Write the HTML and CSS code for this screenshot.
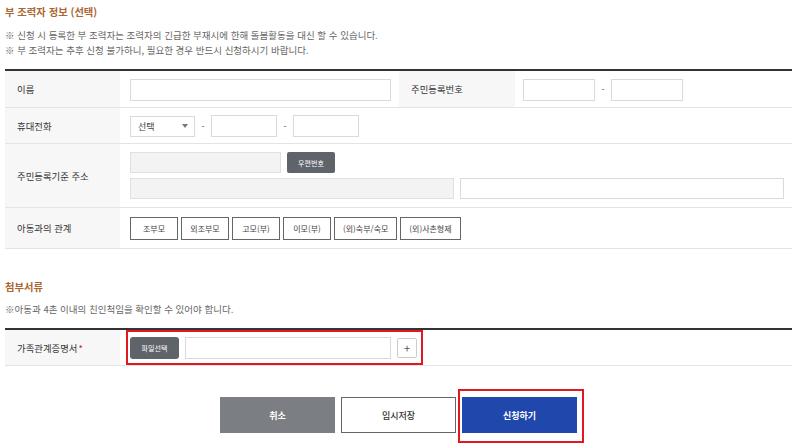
FILE: index.html
```html
<!DOCTYPE html>
<html lang="ko">
<head>
<meta charset="utf-8">
<link rel="stylesheet" href="styles.css">
</head>
<body>
<div class="page">
  <h2 class="sec-title">부 조력자 정보 (선택)</h2>
  <p class="note first">※ 신청 시 등록한 부 조력자는 조력자의 긴급한 부재시에 한해 돌봄활동을 대신 할 수 있습니다.</p>
  <p class="note">※ 부 조력자는 추후 신청 불가하니, 필요한 경우 반드시 신청하시기 바랍니다.</p>

  <div class="form-table">
    <div class="row r1">
      <div class="label">이름</div>
      <div class="cell"><span class="input w260"></span></div>
      <div class="label">주민등록번호</div>
      <div class="cell c2"><span class="input w72"></span><span class="dash">-</span><span class="input w72"></span></div>
    </div>
    <div class="row r2">
      <div class="label">휴대전화</div>
      <div class="cell span3">
        <span class="select"><span>선택</span><span class="caret"></span></span>
        <span class="dash">-</span><span class="input w66"></span>
        <span class="dash">-</span><span class="input w66"></span>
      </div>
    </div>
    <div class="row r3">
      <div class="label">주민등록기준 주소</div>
      <div class="cell span3 addr">
        <div class="line"><span class="input grey w151"></span><span class="btn-dark zip">우편번호</span></div>
        <div class="line"><span class="input grey w323"></span><span class="input w324"></span></div>
      </div>
    </div>
    <div class="row r4">
      <div class="label">아동과의 관계</div>
      <div class="cell span3 rel">
        <span class="chip">조부모</span>
        <span class="chip">외조부모</span>
        <span class="chip">고모(부)</span>
        <span class="chip">이모(부)</span>
        <span class="chip">(외)숙부/숙모</span>
        <span class="chip">(외)사촌형제</span>
      </div>
    </div>
  </div>

  <h2 class="sec-title attach">첨부서류</h2>
  <p class="note first2">※아동과 4촌 이내의 친인척임을 확인할 수 있어야 합니다.</p>

  <div class="form-table">
    <div class="row r5">
      <div class="label">가족관계증명서 <span class="req">*</span></div>
      <div class="cell span3">
        <div class="file-group mark">
          <span class="btn-dark file">파일선택</span>
          <span class="input w206"></span>
          <span class="plus">+</span>
        </div>
      </div>
    </div>
  </div>

  <div class="actions">
    <span class="act cancel">취소</span>
    <span class="act save">임시저장</span>
    <span class="act submit mark2">신청하기</span>
  </div>
</div>
</body>
</html>
```

FILE: styles.css
```css
* { box-sizing: border-box; }
html, body { margin: 0; padding: 0; background: #fff; }
body {
  font-family: "Noto Sans CJK KR", "Noto Sans", sans-serif;
  color: #333;
  width: 800px;
  height: 444px;
  overflow: hidden;
}
.page { padding: 0 8px 0 5px; }

.sec-title {
  margin: 5px 0 0;
  font-size: 10.3px;
  line-height: 14px;
  font-weight: 700;
  color: #ad6530;
}
.sec-title.attach { margin-top: 31px; }

.note {
  margin: 0;
  font-size: 9.5px;
  line-height: 15px;
  color: #666;
}
.note.first { margin-top: 9px; }
.note.first2 { margin-top: 8px; margin-bottom: 11px; }

.form-table {
  border-top: 2px solid #333;
  margin-top: 11px;
}
.note.first2 + .form-table { margin-top: 0; }

.row {
  display: grid;
  grid-template-columns: 115px 279px 116px 1fr;
  border-bottom: 1px solid #e4e4e4;
}
.label {
  background: #f7f7f7;
  font-size: 9.4px;
  color: #333;
  padding-left: 12px;
  display: flex;
  align-items: center;
}
.cell {
  display: flex;
  align-items: center;
  padding-left: 10px;
}
.cell.c2 { padding-left: 8px; }
.span3 { grid-column: 2 / 5; }

.r1 { height: 37px; }
.r2 { height: 36px; }
.r3 { height: 64px; }
.r4 { height: 41px; }
.r5 { height: 36px; }

.r1 .cell, .r2 .cell { padding-top: 1px; }

.input {
  display: inline-block;
  height: 22px;
  border: 1px solid #dadada;
  background: #fff;
}
.input.grey { background: #f3f3f3; border-color: #e0e0e0; }
.w260 { width: 261px; }
.w72 { width: 72px; }
.w66 { width: 66px; }
.w151 { width: 151px; }
.w323 { width: 324px; }
.w324 { width: 324px; margin-left: 6px; }
.w206 { width: 206px; margin-left: 6px; }

.dash {
  font-size: 9px;
  color: #555;
  width: 16px;
  text-align: center;
}

.select {
  display: inline-flex;
  align-items: center;
  justify-content: space-between;
  width: 65px;
  height: 21px;
  border: 1px solid #dadada;
  padding: 0 6px 0 7px;
  font-size: 9px;
  color: #444;
}
.caret {
  width: 0; height: 0;
  border-left: 3px solid transparent;
  border-right: 3px solid transparent;
  border-top: 4px solid #777;
}

.addr {
  flex-direction: column;
  align-items: flex-start;
  justify-content: center;
  gap: 5px;
}
.addr .line { display: flex; align-items: center; }
.addr .input { height: 21px; }

.btn-dark {
  display: inline-flex;
  align-items: center;
  justify-content: center;
  background: #5f636a;
  color: #fff;
  font-size: 7px;
  border-radius: 2px;
}
.zip { width: 48px; height: 21px; margin-left: 6px; }

.rel { gap: 3px; padding-top: 1px; }
.chip {
  display: inline-flex;
  align-items: center;
  justify-content: center;
  height: 23px;
  min-width: 48px;
  padding: 0 8px;
  border: 1px solid #666;
  font-size: 8px;
  color: #444;
  background: #fff;
}

.req { color: #d2232a; margin-left: 1px; }

.file-group {
  display: flex;
  align-items: center;
  position: relative;
  padding-top: 1px;
}
.file { width: 49px; height: 22px; border-radius: 3px; }
.plus {
  display: inline-flex;
  align-items: center;
  justify-content: center;
  width: 20px;
  height: 20px;
  margin-left: 6px;
  border: 1px solid #ccc;
  border-radius: 2px;
  font-size: 11px;
  color: #555;
}
.mark::after {
  content: "";
  position: absolute;
  left: -4px; top: -6px; right: -6px; bottom: -6px;
  border: 2px solid #e0191f;
}

.actions {
  display: flex;
  justify-content: center;
  gap: 6px;
  margin-top: 31px;
}
.act {
  display: inline-flex;
  align-items: center;
  justify-content: center;
  width: 115px;
  height: 36px;
  font-size: 9px;
  font-weight: 700;
  position: relative;
}
.cancel { background: #7b7f83; color: #fff; }
.save { background: #fff; color: #333; border: 1px solid #666; font-weight: 500; }
.submit { background: #1f47ac; color: #fff; }
.mark2::after {
  content: "";
  position: absolute;
  left: -4px; top: -8px; right: -7px; bottom: -10px;
  border: 2px solid #e0191f;
}
```
